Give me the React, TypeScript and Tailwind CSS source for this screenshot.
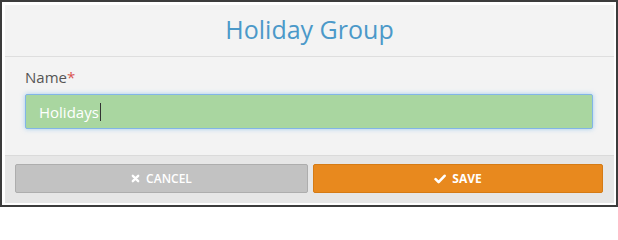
import React from 'react';

const TimesIcon = () => (
  <svg width="9" height="9" viewBox="0 0 10 10" aria-hidden="true">
    <path d="M2 2 L8 8 M8 2 L2 8" stroke="white" strokeWidth="2.6" strokeLinecap="round" fill="none" />
  </svg>
);

const CheckIcon = () => (
  <svg width="12" height="10" viewBox="0 0 12 10" aria-hidden="true">
    <path d="M1.6 5.2 L4.6 8.2 L10.6 1.8" stroke="white" strokeWidth="2.6" strokeLinecap="round" strokeLinejoin="round" fill="none" />
  </svg>
);

export default function App() {
  return (
    <div className="w-[618px] h-[207px] border-2 border-[#3c3c3c] bg-white pt-[3px] pl-[3px] pr-[2px] pb-[2px] font-['Open_Sans',sans-serif]">
      <div className="flex h-full flex-col bg-[#f3f3f3]">
        {/* header */}
        <div className="flex h-[52px] items-center justify-center border-b border-[#dedede] pb-[2px]">
          <h1 className="text-[25px] leading-none text-[#4b99c9]">Holiday Group</h1>
        </div>

        {/* body */}
        <div className="flex-1 pl-[20px] pr-[21px] pt-[10px]">
          <label className="block text-[15px] leading-[20px] text-[#555]">
            Name<span className="text-[#d9534f]">*</span>
          </label>
          <div className="mt-[7px] flex h-[35px] items-center rounded-[2px] border border-[#82b5e6] bg-[#a9d6a0] pl-[13px] shadow-[0_0_5px_rgba(102,175,233,0.55)]">
            <span className="text-[15px] leading-[20px] text-white">Holidays</span>
            <span className="ml-[1px] inline-block h-[18px] w-px bg-[#333]" />
          </div>
        </div>

        {/* footer */}
        <div className="flex gap-[5px] border-t border-[#dadada] bg-[#e6e6e6] pl-[10px] pr-[11px] pt-[8px] pb-[10px]">
          <button className="flex h-[29px] w-[293px] items-center justify-center gap-[6px] rounded-[2px] border border-[#adadad] bg-[#c2c2c2] text-[12px] font-semibold text-white">
            <TimesIcon />
            <span>CANCEL</span>
          </button>
          <button className="flex h-[29px] flex-1 items-center justify-center gap-[6px] rounded-[2px] border border-[#d57b15] bg-[#e8891e] text-[12px] font-bold text-white">
            <CheckIcon />
            <span>SAVE</span>
          </button>
        </div>
      </div>
    </div>
  );
}
